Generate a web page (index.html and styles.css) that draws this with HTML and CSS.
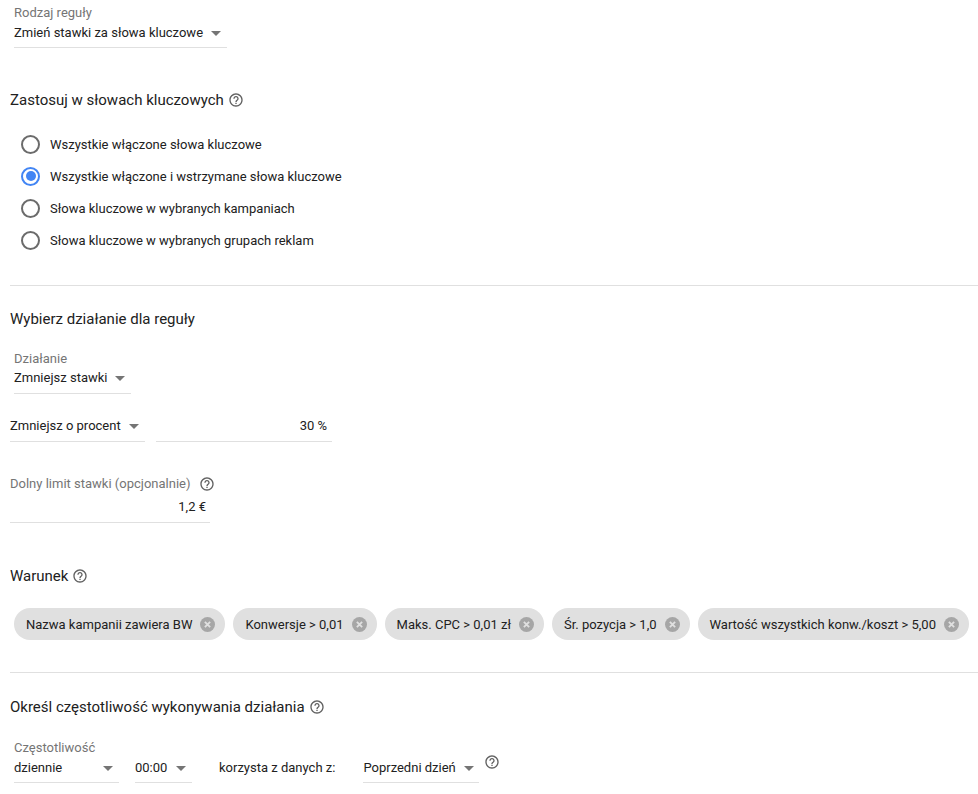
FILE: index.html
```html
<!DOCTYPE html>
<html lang="pl">
<head>
<meta charset="utf-8">
<link rel="stylesheet" href="styles.css">
</head>
<body>
<div class="page">
  <div class="select select-rule">
    <div class="label">Rodzaj reguły</div>
    <div class="value"><span>Zmień stawki za słowa kluczowe</span><i class="arrow"></i></div>
  </div>

  <h2 class="heading h-apply">Zastosuj w słowach kluczowych <svg class="help" viewBox="0 0 24 24"><path d="M11 18h2v-2h-2v2zm1-16C6.48 2 2 6.48 2 12s4.48 10 10 10 10-4.48 10-10S17.52 2 12 2zm0 18c-4.41 0-8-3.59-8-8s3.59-8 8-8 8 3.59 8 8-3.59 8-8 8zm0-14c-2.21 0-4 1.79-4 4h2c0-1.1.9-2 2-2s2 .9 2 2c0 2-3 1.75-3 5h2c0-2.25 3-2.5 3-5 0-2.21-1.79-4-4-4z"/></svg></h2>

  <div class="radios">
    <div class="radio"><span class="circle"></span>Wszystkie włączone słowa kluczowe</div>
    <div class="radio checked"><span class="circle"></span>Wszystkie włączone i wstrzymane słowa kluczowe</div>
    <div class="radio"><span class="circle"></span>Słowa kluczowe w wybranych kampaniach</div>
    <div class="radio"><span class="circle"></span>Słowa kluczowe w wybranych grupach reklam</div>
  </div>

  <hr class="divider div-1">

  <h2 class="heading h-action">Wybierz działanie dla reguły</h2>

  <div class="select select-action">
    <div class="label">Działanie</div>
    <div class="value"><span>Zmniejsz stawki</span><i class="arrow"></i></div>
  </div>

  <div class="row row-percent">
    <div class="select select-percent">
      <div class="value"><span>Zmniejsz o procent</span><i class="arrow"></i></div>
    </div>
    <div class="input input-percent"><span>30 %</span></div>
  </div>

  <div class="field field-limit">
    <div class="label">Dolny limit stawki (opcjonalnie) <svg class="help" viewBox="0 0 24 24"><path d="M11 18h2v-2h-2v2zm1-16C6.48 2 2 6.48 2 12s4.48 10 10 10 10-4.48 10-10S17.52 2 12 2zm0 18c-4.41 0-8-3.59-8-8s3.59-8 8-8 8 3.59 8 8-3.59 8-8 8zm0-14c-2.21 0-4 1.79-4 4h2c0-1.1.9-2 2-2s2 .9 2 2c0 2-3 1.75-3 5h2c0-2.25 3-2.5 3-5 0-2.21-1.79-4-4-4z"/></svg></div>
    <div class="input input-limit"><span>1,2 €</span></div>
  </div>

  <h2 class="heading h-cond">Warunek <svg class="help" viewBox="0 0 24 24"><path d="M11 18h2v-2h-2v2zm1-16C6.48 2 2 6.48 2 12s4.48 10 10 10 10-4.48 10-10S17.52 2 12 2zm0 18c-4.41 0-8-3.59-8-8s3.59-8 8-8 8 3.59 8 8-3.59 8-8 8zm0-14c-2.21 0-4 1.79-4 4h2c0-1.1.9-2 2-2s2 .9 2 2c0 2-3 1.75-3 5h2c0-2.25 3-2.5 3-5 0-2.21-1.79-4-4-4z"/></svg></h2>

  <div class="chips">
    <div class="chip">Nazwa kampanii zawiera BW<svg class="x" viewBox="0 0 16 16"><circle cx="8" cy="8" r="8"/><path d="M5.2 5.2l5.6 5.6M10.8 5.2l-5.6 5.6"/></svg></div>
    <div class="chip">Konwersje &gt; 0,01<svg class="x" viewBox="0 0 16 16"><circle cx="8" cy="8" r="8"/><path d="M5.2 5.2l5.6 5.6M10.8 5.2l-5.6 5.6"/></svg></div>
    <div class="chip">Maks. CPC &gt; 0,01 zł<svg class="x" viewBox="0 0 16 16"><circle cx="8" cy="8" r="8"/><path d="M5.2 5.2l5.6 5.6M10.8 5.2l-5.6 5.6"/></svg></div>
    <div class="chip">Śr. pozycja &gt; 1,0<svg class="x" viewBox="0 0 16 16"><circle cx="8" cy="8" r="8"/><path d="M5.2 5.2l5.6 5.6M10.8 5.2l-5.6 5.6"/></svg></div>
    <div class="chip">Wartość wszystkich konw./koszt &gt; 5,00<svg class="x" viewBox="0 0 16 16"><circle cx="8" cy="8" r="8"/><path d="M5.2 5.2l5.6 5.6M10.8 5.2l-5.6 5.6"/></svg></div>
  </div>

  <hr class="divider div-2">

  <h2 class="heading h-freq">Określ częstotliwość wykonywania działania <svg class="help" viewBox="0 0 24 24"><path d="M11 18h2v-2h-2v2zm1-16C6.48 2 2 6.48 2 12s4.48 10 10 10 10-4.48 10-10S17.52 2 12 2zm0 18c-4.41 0-8-3.59-8-8s3.59-8 8-8 8 3.59 8 8-3.59 8-8 8zm0-14c-2.21 0-4 1.79-4 4h2c0-1.1.9-2 2-2s2 .9 2 2c0 2-3 1.75-3 5h2c0-2.25 3-2.5 3-5 0-2.21-1.79-4-4-4z"/></svg></h2>

  <div class="freq">
    <div class="label freq-label">Częstotliwość</div>
    <div class="freq-row">
      <div class="select select-daily"><div class="value"><span>dziennie</span><i class="arrow"></i></div></div>
      <div class="select select-time"><div class="value"><span>00:00</span><i class="arrow"></i></div></div>
      <span class="freq-text">korzysta z danych z:</span>
      <div class="select select-prev"><div class="value"><span>Poprzedni dzień</span><i class="arrow"></i></div></div>
      <svg class="help help-prev" viewBox="0 0 24 24"><path d="M11 18h2v-2h-2v2zm1-16C6.48 2 2 6.48 2 12s4.48 10 10 10 10-4.48 10-10S17.52 2 12 2zm0 18c-4.41 0-8-3.59-8-8s3.59-8 8-8 8 3.59 8 8-3.59 8-8 8zm0-14c-2.21 0-4 1.79-4 4h2c0-1.1.9-2 2-2s2 .9 2 2c0 2-3 1.750-3 5h2c0-2.25 3-2.5 3-5 0-2.21-1.79-4-4-4z"/></svg>
    </div>
  </div>
</div>
</body>
</html>
```

FILE: styles.css
```css
* { box-sizing: border-box; }
html, body { margin: 0; padding: 0; background: #fff; }
body {
  font-family: Roboto, "Noto Sans", "Liberation Sans", sans-serif;
  color: #212121;
  font-size: 13px;
  white-space: nowrap;
}
.page { padding: 0 0 0 10px; width: 978px; }

.label { font-size: 13px; line-height: 16px; color: #757575; }
.value {
  display: flex; align-items: center; justify-content: space-between;
  font-size: 13px; line-height: 20px; color: #212121;
}
.arrow {
  display: inline-block; width: 0; height: 0;
  border-left: 5px solid transparent; border-right: 5px solid transparent;
  border-top: 5px solid #757575;
  margin-left: 8px; flex: none;
}
.select { border-bottom: 1px solid #e0e0e0; }
.select .value { padding-right: 6px; }

.select-rule { margin: 5px 0 0 4px; width: 213px; }
.select-rule .label { margin-bottom: 2px; }
.select-rule .value { padding-bottom: 4px; }

.heading {
  margin: 0; font-weight: 400; font-size: 15px; line-height: 24px; color: #212121;
  display: flex; align-items: center;
}
.help { width: 16px; height: 16px; fill: #616161; margin-left: 4px; flex: none; }
.h-apply { margin-top: 40px; }

.radios { margin-top: 16px; }
.radio {
  display: flex; align-items: center; height: 32px; font-size: 13px; color: #212121;
}
.circle {
  width: 19px; height: 19px; border-radius: 50%;
  border: 2px solid #6b6b6b; margin: 0 10px 0 11px; position: relative;
  flex: none;
}
.radio.checked .circle { border-color: #4285f4; }
.radio.checked .circle::after {
  content: ""; position: absolute; left: 2.5px; top: 2.5px; width: 10px; height: 10px;
  border-radius: 50%; background: #4285f4;
}

.divider { border: 0; border-top: 1px solid #e0e0e0; margin: 0; }
.div-1 { margin-top: 29px; }
.h-action { margin-top: 21px; }

.select-action { margin: 20px 0 0 4px; width: 117px; }
.select-action .label { margin-bottom: 1px; }
.select-action .value { padding-bottom: 5px; }

.row-percent { display: flex; margin-top: 22px; gap: 11px; }
.select-percent { width: 135px; }
.select-percent .value { padding-bottom: 5px; }
.input {
  border-bottom: 1px solid #e0e0e0; font-size: 13px; line-height: 20px;
  text-align: right; padding-right: 5px;
}
.input-percent { width: 176px; padding-bottom: 5px; }

.field-limit { margin-top: 34px; width: 200px; }
.field-limit .label { display: flex; align-items: center; }
.field-limit .label .help { margin-left: 9px; }
.input-limit { margin-top: 5px; padding-bottom: 5px; padding-right: 4px; }

.h-cond { margin-top: 41px; }

.chips { display: flex; gap: 8px; margin: 20px 0 0 4px; }
.chip {
  height: 32px; border-radius: 16px; background: #e0e0e0;
  display: flex; align-items: center; padding: 0 10px 0 12px;
  font-size: 13px; color: #212121;
}
.chip .x { width: 15px; height: 15px; margin-left: 8px; flex: none; }
.chip .x circle { fill: #a6a6a6; }
.chip .x path { stroke: #e0e0e0; stroke-width: 2; fill: none; }

.div-2 { margin-top: 32px; }
.h-freq { margin-top: 22px; }

.freq { margin: 21px 0 0 4px; }
.freq-label { margin-bottom: 2px; }
.freq-row { display: flex; align-items: flex-start; }
.freq-row .value { padding-bottom: 4px; }
.select-daily { width: 105px; }
.select-time { width: 57px; margin-left: 16px; }
.freq-text { font-size: 13px; line-height: 20px; margin-left: 27px; }
.select-prev { width: 116px; margin-left: 28px; }
.help-prev { margin: -4px 0 0 5px; }
```
